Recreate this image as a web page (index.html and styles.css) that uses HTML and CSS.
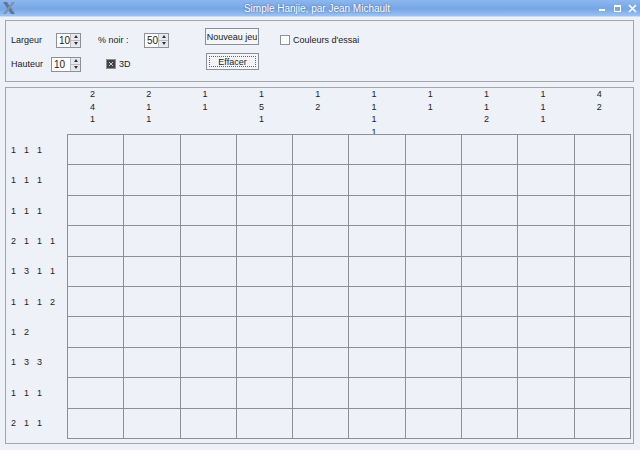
FILE: index.html
```html
<!DOCTYPE html>
<html lang="fr">
  <head>
    <meta charset="UTF-8" />
    <title>Simple Hanjie, par Jean Michault</title>
    <link rel="stylesheet" href="styles.css">
  </head>

  <body>
    <header class="titlebar">
      <svg class="logo" width="14" height="14" viewBox="0 0 14 14">
        <path d="M1 1 L5 1 L13 13 L9 13 Z" fill="#5f7894" />
        <path d="M13 1 L10 1 L1 13 L4 13 Z" fill="#7d93ad" />
      </svg>
      <span class="title">Simple Hanjie, par Jean Michault</span>
      <span class="winbtns">
        <svg width="9" height="9" viewBox="0 0 9 9"><rect x="1" y="5" width="6" height="2" fill="#fff" /></svg>
        <svg width="9" height="9" viewBox="0 0 9 9"><rect x="1.5" y="1.5" width="6" height="6" fill="none" stroke="#fff" /><rect x="1" y="1" width="7" height="2" fill="#fff" /></svg>
        <svg width="9" height="9" viewBox="0 0 9 9"><path d="M1 1 L8 8 M8 1 L1 8" stroke="#fff" stroke-width="1.6" /></svg>
      </span>
    </header>

    <section class="toolbar">
      <div class="group size">
        <div class="row">
          <span>Largeur</span>
          <span class="spin"><span class="val">10</span><span class="arrows"><i class="up"></i><i class="down"></i></span></span>
        </div>
        <div class="row">
          <span>Hauteur</span>
          <span class="spin wide"><span class="val">10</span><span class="arrows"><i class="up"></i><i class="down"></i></span></span>
        </div>
      </div>

      <div class="group noir">
        <div class="row">
          <span>% noir :</span>
          <span class="spin"><span class="val">50</span><span class="arrows"><i class="up"></i><i class="down"></i></span></span>
        </div>
        <div class="row">
          <label class="check indent"><span class="box checked"></span>3D</label>
        </div>
      </div>

      <div class="group buttons">
        <button>Nouveau jeu</button>
        <button class="focus"><span>Effacer</span></button>
      </div>

      <div class="group">
        <div class="row">
          <label class="check"><span class="box"></span>Couleurs d'essai</label>
        </div>
      </div>
    </section>

    <main class="board">
      <div class="corner"></div>

      <div class="colclues">
        <div><p>2</p><p>4</p><p>1</p></div>
        <div><p>2</p><p>1</p><p>1</p></div>
        <div><p>1</p><p>1</p></div>
        <div><p>1</p><p>5</p><p>1</p></div>
        <div><p>1</p><p>2</p></div>
        <div><p>1</p><p>1</p><p>1</p><p>1</p></div>
        <div><p>1</p><p>1</p></div>
        <div><p>1</p><p>1</p><p>2</p></div>
        <div><p>1</p><p>1</p><p>1</p></div>
        <div><p>4</p><p>2</p></div>
      </div>

      <div class="rowclues">
        <div><b>1</b><b>1</b><b>1</b></div>
        <div><b>1</b><b>1</b><b>1</b></div>
        <div><b>1</b><b>1</b><b>1</b></div>
        <div><b>2</b><b>1</b><b>1</b><b>1</b></div>
        <div><b>1</b><b>3</b><b>1</b><b>1</b></div>
        <div><b>1</b><b>1</b><b>1</b><b>2</b></div>
        <div><b>1</b><b>2</b></div>
        <div><b>1</b><b>3</b><b>3</b></div>
        <div><b>1</b><b>1</b><b>1</b></div>
        <div><b>2</b><b>1</b><b>1</b></div>
      </div>

      <div class="cells">
        <div></div><div></div><div></div><div></div><div></div><div></div><div></div><div></div><div></div><div></div>
        <div></div><div></div><div></div><div></div><div></div><div></div><div></div><div></div><div></div><div></div>
        <div></div><div></div><div></div><div></div><div></div><div></div><div></div><div></div><div></div><div></div>
        <div></div><div></div><div></div><div></div><div></div><div></div><div></div><div></div><div></div><div></div>
        <div></div><div></div><div></div><div></div><div></div><div></div><div></div><div></div><div></div><div></div>
        <div></div><div></div><div></div><div></div><div></div><div></div><div></div><div></div><div></div><div></div>
        <div></div><div></div><div></div><div></div><div></div><div></div><div></div><div></div><div></div><div></div>
        <div></div><div></div><div></div><div></div><div></div><div></div><div></div><div></div><div></div><div></div>
        <div></div><div></div><div></div><div></div><div></div><div></div><div></div><div></div><div></div><div></div>
        <div></div><div></div><div></div><div></div><div></div><div></div><div></div><div></div><div></div><div></div>
      </div>
    </main>
  </body>
</html>
```

FILE: styles.css
```css
html,
body {
  margin: 0;
  padding: 0;
  height: 100%;
}

body {
  display: flex;
  flex-direction: column;
  background: #eef1f7;
  font-family: "Liberation Sans", Arial, sans-serif;
  font-size: 9px;
  color: #222;
  overflow: hidden;
}

/* window title */
.titlebar {
  flex-shrink: 0;
  height: 16px;
  display: flex;
  align-items: center;
  padding: 0 3px 0 2px;
  background: linear-gradient(#8db7ee, #76a6e6 55%, #9cc2f2);
  border-bottom: 1px solid #c9dcf5;
}

.titlebar .title {
  flex-grow: 1;
  text-align: center;
  color: #fff;
  font-size: 10px;
  text-shadow: 0 0 2px #33578a;
  padding-left: 20px;
}

.winbtns {
  display: flex;
  gap: 6px;
}

/* top controls */
.toolbar {
  flex-shrink: 0;
  height: 62px;
  margin: 3px 6px 0 5px;
  border: 1px solid #a3a6ab;
  display: flex;
  padding: 11px 0 0 5px;
  box-sizing: border-box;
}

.group {
  display: flex;
  flex-direction: column;
  gap: 8px;
}

.row {
  height: 16px;
  display: flex;
  align-items: center;
  justify-content: space-between;
}

.size {
  width: 70px;
}

.noir {
  width: 71px;
  margin-left: 17px;
}

.buttons {
  margin: -4px 0 0 36px;
}

.buttons + .group {
  margin-left: 21px;
}

.spin {
  display: flex;
  height: 15px;
  width: 25px;
  border: 1px solid #8d9096;
  background: #fff;
  box-sizing: border-box;
}

.spin.wide {
  width: 30px;
}

.spin .val {
  flex-grow: 1;
  padding-left: 2px;
  line-height: 13px;
  font-size: 10px;
}

.arrows {
  width: 9px;
  display: flex;
  flex-direction: column;
  border-left: 1px solid #b8bbc0;
  background: #e6e9ef;
}

.arrows i {
  flex: 1;
  display: flex;
  align-items: center;
  justify-content: center;
}

.arrows i::before {
  content: "";
  border-left: 2.5px solid transparent;
  border-right: 2.5px solid transparent;
}

.arrows .up::before {
  border-bottom: 3px solid #333;
}

.arrows .down {
  border-top: 1px solid #b8bbc0;
}

.arrows .down::before {
  border-top: 3px solid #333;
}

.check {
  display: flex;
  align-items: center;
  gap: 3px;
}

.check.indent {
  margin-left: 8px;
}

.box {
  width: 8px;
  height: 8px;
  border: 1px solid #8d9096;
  background: #fff;
  position: relative;
}

.box.checked {
  background: #444;
}

.box.checked::after {
  content: "";
  position: absolute;
  left: 2px;
  top: 2px;
  width: 4px;
  height: 4px;
  background: linear-gradient(45deg, transparent 40%, #ccc 40%, #ccc 60%, transparent 60%),
    linear-gradient(-45deg, transparent 40%, #ccc 40%, #ccc 60%, transparent 60%);
}

button {
  font-family: inherit;
  font-size: 9px;
  height: 17px;
  width: 54px;
  padding: 0;
  border: 1px solid #8d9096;
  background: #f3f5f9;
  color: #222;
}

button.focus {
  margin-left: 1px;
  width: 53px;
  padding: 2px;
}

button.focus span {
  display: block;
  height: 100%;
  line-height: 11px;
  border: 1px dotted #666;
  box-sizing: border-box;
}

/* puzzle */
.board {
  flex-grow: 1;
  margin: 5px 6px 6px 5px;
  border: 1px solid #a3a6ab;
  display: grid;
  grid-template-columns: 61px 1fr;
  grid-template-rows: 46px 1fr;
  padding: 0 2px 4px 0;
}

.colclues {
  display: grid;
  grid-template-columns: repeat(10, 1fr);
  padding-right: 1px;
}

.colclues div {
  padding-left: 23px;
}

.colclues p {
  margin: 0;
  line-height: 12.5px;
}

.rowclues {
  display: grid;
  grid-template-rows: repeat(10, 1fr);
  padding: 1px 0;
}

.rowclues div {
  display: flex;
  align-items: center;
  padding-left: 5px;
}

.rowclues b {
  font-weight: normal;
  width: 13px;
}

.cells {
  display: grid;
  grid-template-columns: repeat(10, 1fr);
  grid-template-rows: repeat(10, 1fr);
  gap: 1px;
  background: #8e9095;
  border: 1px solid #8e9095;
}

.cells div {
  background: #eef1f7;
}
```
